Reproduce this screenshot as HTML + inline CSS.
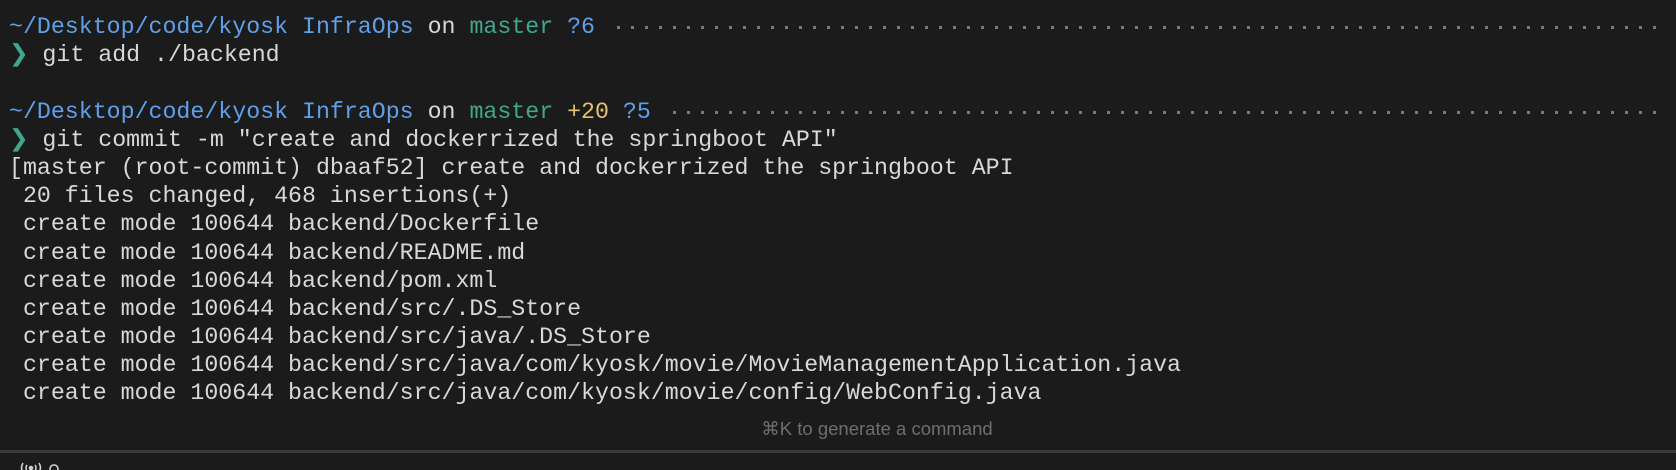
<!DOCTYPE html>
<html><head><meta charset="utf-8"><style>
html,body{margin:0;padding:0;background:#1b1b1b;width:1676px;height:470px;overflow:hidden;position:relative}
.t{position:absolute;left:9px;top:13px;width:1658px;font-family:"Liberation Mono",monospace;font-size:23.25px;line-height:28.2px;color:#d8d8d8}
.l{height:28.2px;position:relative;white-space:pre}
.b{color:#5fa0ea}.g{color:#3fa88c}.y{color:#e6c170}
.d{position:absolute;right:0;top:13px;height:3px;background-image:linear-gradient(90deg,#7a7a7a 0,#7a7a7a 3px,transparent 3px);background-size:14px 3px;background-position:right center}
.h{position:absolute;text-align:center;top:418px;left:735px;width:284px;font-family:"Liberation Sans",sans-serif;font-size:18.5px;color:#6e6e6e;white-space:nowrap}
.sep{position:absolute;left:0;right:0;top:450px;height:3px;background:#3a3a3a}
</style></head><body>
<div class="t"><div class="l"><span class="b">~/Desktop/code/kyosk InfraOps</span> on <span class="g">master</span> <span class="b">?6</span><span class="d" style="left:606px"></span></div><div class="l"><span class="g">❯</span> git add ./backend</div><div class="l"> </div><div class="l"><span class="b">~/Desktop/code/kyosk InfraOps</span> on <span class="g">master</span> <span class="y">+20</span> <span class="b">?5</span><span class="d" style="left:662px"></span></div><div class="l"><span class="g">❯</span> git commit -m "create and dockerrized the springboot API"</div><div class="l">[master (root-commit) dbaaf52] create and dockerrized the springboot API</div><div class="l"> 20 files changed, 468 insertions(+)</div><div class="l"> create mode 100644 backend/Dockerfile</div><div class="l"> create mode 100644 backend/README.md</div><div class="l"> create mode 100644 backend/pom.xml</div><div class="l"> create mode 100644 backend/src/.DS_Store</div><div class="l"> create mode 100644 backend/src/java/.DS_Store</div><div class="l"> create mode 100644 backend/src/java/com/kyosk/movie/MovieManagementApplication.java</div><div class="l"> create mode 100644 backend/src/java/com/kyosk/movie/config/WebConfig.java</div></div>
<div class="h">⌘K to generate a command</div>
<div class="sep"></div>
<svg style="position:absolute;left:18px;top:460px" width="50" height="14" viewBox="0 0 50 14" fill="none" stroke="#cfcfcf" stroke-width="1.6">
<path d="M5 12 Q2 8 5 3"/><path d="M9 11 Q7 8 9 5"/><circle cx="13" cy="8" r="1.5" fill="#cfcfcf"/><path d="M17 11 Q19 8 17 5"/><path d="M21 12 Q24 8 21 3"/>
<path d="M32 10 Q32 5 36 5 Q40 5 40 10"/>
</svg>
</body></html>
